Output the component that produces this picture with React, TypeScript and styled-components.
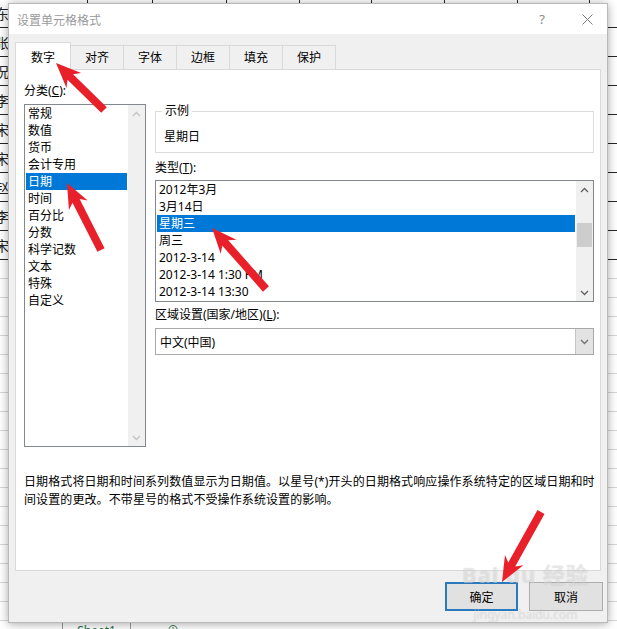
import React from 'react';
import styled, { createGlobalStyle } from 'styled-components';

const FONT = `"Noto Sans", "Noto Sans CJK SC", sans-serif`;

const GlobalStyle = createGlobalStyle`
    html, body {
        margin: 0;
        padding: 0;
        background: #fff;
    }
    body {
        font-family: ${FONT};
        font-size: 12px;
        color: #000;
    }
`;

const Page = styled.div`
    position: relative;
    width: 617px;
    height: 629px;
    overflow: hidden;
    background: #fff;
`;

/* ---- spreadsheet behind the dialog ---- */

const SheetGrid = styled.div`
    margin-top: -1px;
    height: 622px;
    display: flex;
    flex-direction: column;
    overflow: hidden;
`;

const SheetRow = styled.div<{ $h: number; $dark: boolean }>`
    display: flex;
    flex-shrink: 0;
    height: ${(p) => p.$h}px;
    box-sizing: border-box;
    border-bottom: 1px solid ${(p) => (p.$dark ? '#262626' : '#d6d6d6')};
`;

const SheetCell = styled.div<{ $w: number; $dark: boolean }>`
    flex-shrink: 0;
    width: ${(p) => p.$w}px;
    box-sizing: border-box;
    border-right: 1px solid ${(p) => (p.$dark ? '#262626' : '#d6d6d6')};
    display: flex;
    align-items: center;
    overflow: hidden;
    font-family: "Noto Sans CJK SC", sans-serif;
    font-size: 14px;
    color: #222;
`;

const CellText = styled.span`
    margin-left: -5px;
    white-space: nowrap;
`;

const SheetTabs = styled.div`
    height: 24px;
    display: flex;
    align-items: flex-start;
    background: #fff;
    font-size: 12px;
`;

const TabSep = styled.div`
    width: 1px;
    height: 20px;
    background: #9a9a9a;
`;

const SheetTab = styled.div<{ $w: number }>`
    width: ${(p) => p.$w}px;
    display: flex;
    justify-content: center;
    line-height: 16px;
    padding-top: 2px;
    color: #217346;
`;

/* ---- dialog ---- */

const Dialog = styled.div`
    position: absolute;
    left: 8px;
    top: 3px;
    width: 600px;
    height: 620px;
    box-sizing: border-box;
    border: 1px solid #b9b9b9;
    background: #f0f0f0;
    box-shadow: 0 1px 9px rgba(0, 0, 0, 0.35);
    display: flex;
    flex-direction: column;
    z-index: 2;
`;

const TitleBar = styled.div`
    height: 30px;
    background: #fff;
    display: flex;
    align-items: center;
    padding-left: 8px;
`;

const Title = styled.div`
    flex: 1;
    font-size: 12px;
    color: #9a9a9a;
    font-family: "Noto Sans CJK SC", sans-serif;
`;

const TitleButton = styled.div<{ $w: number }>`
    width: ${(p) => p.$w}px;
    height: 30px;
    display: flex;
    align-items: center;
    justify-content: center;
    color: #8a8a8a;
    font-size: 13px;
`;

const Body = styled.div`
    flex: 1;
    padding: 9px 6px 0 6px;
    display: flex;
    flex-direction: column;
`;

const TabStrip = styled.div`
    display: flex;
    align-items: flex-end;
    height: 27px;
    margin-bottom: -1px;
    position: relative;
    z-index: 1;
`;

const Tab = styled.div<{ $active?: boolean }>`
    box-sizing: border-box;
    width: ${(p) => (p.$active ? 56 : 54)}px;
    height: ${(p) => (p.$active ? 28 : 24)}px;
    margin-bottom: ${(p) => (p.$active ? 0 : 1)}px;
    margin-left: ${(p) => (p.$active ? 0 : -1)}px;
    border: 1px solid #d9d9d9;
    border-bottom: none;
    background: ${(p) => (p.$active ? '#fff' : '#f0f0f0')};
    display: flex;
    align-items: center;
    justify-content: center;
    padding-top: ${(p) => (p.$active ? 2 : 0)}px;
    font-size: 12px;
    line-height: 16px;
    &:first-child {
        margin-left: 0;
    }
`;

const Panel = styled.div`
    width: 586px;
    height: 502px;
    box-sizing: border-box;
    border: 1px solid #d9d9d9;
    background: #fff;
    padding: 13px 6px 0 8px;
    display: flex;
    flex-direction: column;
`;

const Columns = styled.div`
    display: flex;
    gap: 9px;
`;

const LeftCol = styled.div`
    width: 122px;
    display: flex;
    flex-direction: column;
`;

const RightCol = styled.div`
    flex: 1;
    min-width: 0;
    display: flex;
    flex-direction: column;
`;

const Label = styled.div<{ $mt?: number; $mb?: number }>`
    font-size: 12px;
    line-height: 16px;
    height: 16px;
    margin-top: ${(p) => p.$mt ?? 0}px;
    margin-bottom: ${(p) => p.$mb ?? 0}px;
    white-space: nowrap;
`;

const ListBox = styled.div<{ $h: number }>`
    height: ${(p) => p.$h}px;
    box-sizing: border-box;
    border: 1px solid #828790;
    display: flex;
    background: #fff;
`;

const Items = styled.div`
    flex: 1;
    padding: 0 1px;
    overflow: hidden;
`;

const Item = styled.div<{ $selected?: boolean; $pl: number }>`
    height: 17px;
    line-height: 17px;
    padding-left: ${(p) => p.$pl}px;
    font-size: 12px;
    white-space: nowrap;
    background: ${(p) => (p.$selected ? '#0078d7' : 'transparent')};
    color: ${(p) => (p.$selected ? '#fff' : '#000')};
`;

const ScrollBar = styled.div`
    width: 17px;
    flex-shrink: 0;
    background: #f0f0f0;
    display: flex;
    flex-direction: column;
`;

const ScrollArrow = styled.div`
    height: 17px;
    display: flex;
    align-items: center;
    justify-content: center;
`;

const ScrollTrack = styled.div`
    flex: 1;
    display: flex;
    flex-direction: column;
`;

const Thumb = styled.div<{ $h: number }>`
    height: ${(p) => p.$h}px;
    margin: 0 1px;
    background: #cdcdcd;
`;

const GroupBox = styled.fieldset`
    margin: 20px 0 0 0;
    padding: 10px 8px 7px 8px;
    border: 1px solid #dcdcdc;
    min-width: 0;
`;

const Legend = styled.legend`
    padding: 0 3px;
    margin-left: -2px;
    font-size: 12px;
    line-height: 16px;
`;

const SampleText = styled.div`
    font-size: 12px;
    line-height: 16px;
`;

const Combo = styled.div`
    height: 27px;
    box-sizing: border-box;
    border: 1px solid #a8a8a8;
    display: flex;
    background: #fff;
`;

const ComboText = styled.div`
    flex: 1;
    padding-left: 4px;
    display: flex;
    align-items: center;
    font-size: 12px;
`;

const ComboButton = styled.div`
    width: 17px;
    background: #e3e3e3;
    border-left: 1px solid #c4c4c4;
    display: flex;
    align-items: center;
    justify-content: center;
`;

const Description = styled.div`
    margin-top: 26px;
    font-size: 12px;
    line-height: 18px;
    letter-spacing: 0.1px;
    white-space: nowrap;
`;

const Footer = styled.div`
    display: flex;
    justify-content: flex-end;
    gap: 11px;
    margin-top: 11px;
    margin-right: -2px;
`;

const Button = styled.div<{ $primary?: boolean; $w: number }>`
    width: ${(p) => p.$w}px;
    height: 29px;
    box-sizing: border-box;
    background: #e1e1e1;
    border: ${(p) => (p.$primary ? '2px solid #2b79bd' : '1px solid #adadad')};
    display: flex;
    align-items: center;
    justify-content: center;
    font-size: 12px;
`;

const Overlay = styled.svg`
    position: absolute;
    left: 0;
    top: 0;
    pointer-events: none;
    z-index: 5;
`;

const Watermark = styled.div`
    position: absolute;
    left: 462px;
    top: 562px;
    z-index: 4;
    pointer-events: none;
    display: flex;
    flex-direction: column;
    align-items: center;
    color: rgba(255, 255, 255, 0.45);
    text-shadow: 0 0 1px rgba(0, 0, 0, 0.18);
    font-family: "Noto Sans", "Noto Sans CJK SC", sans-serif;
`;

const WatermarkBig = styled.div`
    font-size: 22px;
    line-height: 24px;
    font-weight: 700;
    letter-spacing: 1px;
`;

const WatermarkSmall = styled.div`
    font-size: 12px;
    line-height: 14px;
    margin-top: 22px;
`;

const Chevron = ({ up, color }: { up?: boolean; color: string }) => (
    <svg width="9" height="6" viewBox="0 0 9 6">
        <polyline
            points={up ? '1,5 4.5,1.5 8,5' : '1,1 4.5,4.5 8,1'}
            fill="none"
            stroke={color}
            strokeWidth="1.3"
        />
    </svg>
);

const CloseIcon = () => (
    <svg width="11" height="11" viewBox="0 0 11 11">
        <path d="M0.5 0.5 L10.5 10.5 M10.5 0.5 L0.5 10.5" stroke="#7a7a7a" strokeWidth="1" />
    </svg>
);

type Pt = [number, number];

const arrowPoints = (tip: Pt, tail: Pt) => {
    const dx = tip[0] - tail[0];
    const dy = tip[1] - tail[1];
    const len = Math.hypot(dx, dy);
    const ux = dx / len;
    const uy = dy / len;
    const nx = -uy;
    const ny = ux;
    const L = 25;
    const W = 10.5;
    const notch = 5;
    const w = 4;
    const at = (d: number, s: number) => `${tip[0] - ux * d + nx * s},${tip[1] - uy * d + ny * s}`;
    return [
        at(0, 0),
        at(L, W),
        at(L - notch, w),
        at(len, w),
        at(len, -w),
        at(L - notch, -w),
        at(L, -W),
    ].join(' ');
};

const arrows: [Pt, Pt][] = [
    [[56, 63], [104, 110]],
    [[67, 183], [101, 250]],
    [[212, 228], [266, 289]],
    [[502, 582], [541, 512]],
];

const names = ['东', '张', '况', '李', '宋', '宋', '赵', '李', '宋'];
const colWidths = [88, 65, 74, 73, 72, 73, 73, 72, 60];

const categories = ['常规', '数值', '货币', '会计专用', '日期', '时间', '百分比', '分数', '科学记数', '文本', '特殊', '自定义'];
const types = ['2012年3月', '3月14日', '星期三', '周三', '2012-3-14', '2012-3-14 1:30 PM', '2012-3-14 13:30'];
const tabs = ['数字', '对齐', '字体', '边框', '填充', '保护'];

const Sheet = () => {
    const rows = [
        ...names.map((n) => ({ h: 29, dark: true, text: n })),
        ...Array.from({ length: 19 }, () => ({ h: 19, dark: false, text: '' })),
    ];
    return (
        <>
            <SheetGrid>
                {rows.map((r, i) => (
                    <SheetRow key={i} $h={r.h} $dark={r.dark}>
                        {colWidths.map((w, j) => (
                            <SheetCell key={j} $w={w} $dark={r.dark}>
                                {j === 0 && r.text ? <CellText>{r.text}</CellText> : null}
                            </SheetCell>
                        ))}
                    </SheetRow>
                ))}
            </SheetGrid>
            <SheetTabs>
                <SheetTab $w={62} />
                <TabSep />
                <SheetTab $w={67}>Sheet1</SheetTab>
                <TabSep />
                <SheetTab $w={84}>⊕</SheetTab>
            </SheetTabs>
        </>
    );
};

const App = () => {
    return (
        <Page>
            <GlobalStyle />
            <Sheet />
            <Dialog>
                <TitleBar>
                    <Title>设置单元格格式</Title>
                    <TitleButton $w={50}>?</TitleButton>
                    <TitleButton $w={40}>
                        <CloseIcon />
                    </TitleButton>
                </TitleBar>
                <Body>
                    <TabStrip>
                        {tabs.map((t, i) => (
                            <Tab key={t} $active={i === 0}>
                                {t}
                            </Tab>
                        ))}
                    </TabStrip>
                    <Panel>
                        <Columns>
                            <LeftCol>
                                <Label $mb={5}>
                                    分类(<u>C</u>):
                                </Label>
                                <ListBox $h={343}>
                                    <Items>
                                        {categories.map((c) => (
                                            <Item key={c} $pl={2} $selected={c === '日期'}>
                                                {c}
                                            </Item>
                                        ))}
                                    </Items>
                                    <ScrollBar>
                                        <ScrollArrow>
                                            <Chevron up color="#c2c2c2" />
                                        </ScrollArrow>
                                        <ScrollTrack />
                                        <ScrollArrow>
                                            <Chevron color="#c2c2c2" />
                                        </ScrollArrow>
                                    </ScrollBar>
                                </ListBox>
                            </LeftCol>
                            <RightCol>
                                <GroupBox>
                                    <Legend>示例</Legend>
                                    <SampleText>星期日</SampleText>
                                </GroupBox>
                                <Label $mt={7} $mb={4}>
                                    类型(<u>T</u>):
                                </Label>
                                <ListBox $h={122}>
                                    <Items>
                                        {types.map((t) => (
                                            <Item key={t} $pl={2} $selected={t === '星期三'}>
                                                {t}
                                            </Item>
                                        ))}
                                    </Items>
                                    <ScrollBar>
                                        <ScrollArrow>
                                            <Chevron up color="#606060" />
                                        </ScrollArrow>
                                        <ScrollTrack>
                                            <Thumb $h={24} style={{ marginTop: 25 }} />
                                        </ScrollTrack>
                                        <ScrollArrow>
                                            <Chevron color="#606060" />
                                        </ScrollArrow>
                                    </ScrollBar>
                                </ListBox>
                                <Label $mt={5} $mb={5}>
                                    区域设置(国家/地区)(<u>L</u>):
                                </Label>
                                <Combo>
                                    <ComboText>中文(中国)</ComboText>
                                    <ComboButton>
                                        <Chevron color="#707070" />
                                    </ComboButton>
                                </Combo>
                            </RightCol>
                        </Columns>
                        <Description>
                            日期格式将日期和时间系列数值显示为日期值。以星号(*)开头的日期格式响应操作系统特定的区域日期和时
                            <br />
                            间设置的更改。不带星号的格式不受操作系统设置的影响。
                        </Description>
                    </Panel>
                    <Footer>
                        <Button $primary $w={73}>
                            确定
                        </Button>
                        <Button $w={74}>取消</Button>
                    </Footer>
                </Body>
            </Dialog>
            <Watermark>
                <WatermarkBig>Bai du 经验</WatermarkBig>
                <WatermarkSmall>jingyan.baidu.com</WatermarkSmall>
            </Watermark>
            <Overlay width={617} height={629} viewBox="0 0 617 629">
                {arrows.map(([tip, tail], i) => (
                    <polygon key={i} points={arrowPoints(tip, tail)} fill="#e8202a" strokeLinejoin="round" />
                ))}
            </Overlay>
        </Page>
    );
};

export default App;
